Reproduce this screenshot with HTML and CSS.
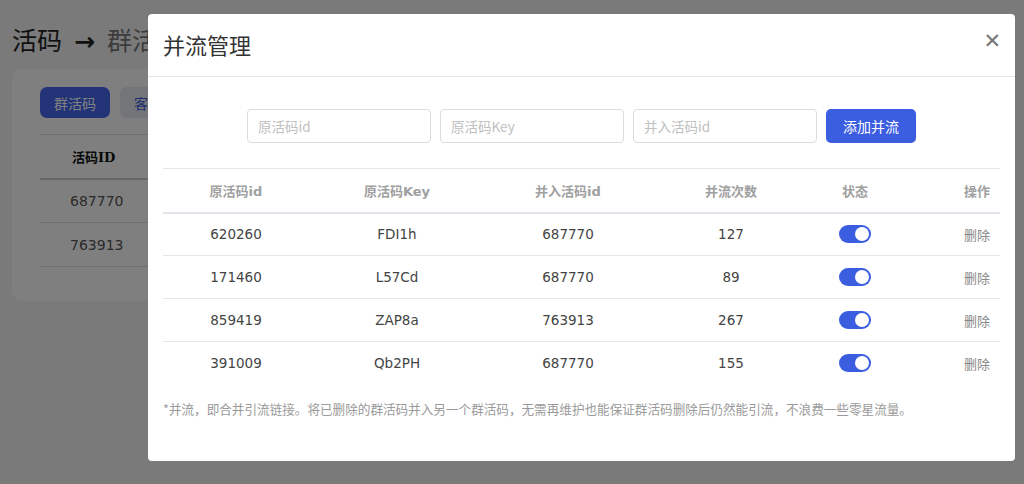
FILE: index.html
```html
<!DOCTYPE html>
<html lang="zh-CN">
<head>
<meta charset="utf-8">
<title>并流管理</title>
<link rel="stylesheet" href="styles.css">
</head>
<body>
<div class="page">
  <h1 class="page-title">活码<span class="arrow">→</span><span class="sub">群活码</span></h1>
  <div class="card">
    <div class="tabs">
      <button class="tab active">群活码</button>
      <button class="tab">客服码</button>
    </div>
    <table class="bg-table">
      <thead><tr><th>活码ID</th></tr></thead>
      <tbody>
        <tr><td>687770</td></tr>
        <tr><td>763913</td></tr>
      </tbody>
    </table>
  </div>
</div>

<div class="overlay"></div>

<div class="modal">
  <div class="modal-header">
    <h2 class="modal-title">并流管理</h2>
    <span class="close">✕</span>
  </div>
  <div class="modal-body">
    <div class="form-row">
      <input class="field" placeholder="原活码id">
      <input class="field" placeholder="原活码Key">
      <input class="field" placeholder="并入活码id">
      <button class="btn-primary">添加并流</button>
    </div>
    <table class="merge-table">
      <colgroup>
        <col class="c1"><col class="c2"><col class="c3"><col class="c4"><col class="c5"><col class="c6">
      </colgroup>
      <thead>
        <tr><th>原活码id</th><th>原活码Key</th><th>并入活码id</th><th>并流次数</th><th>状态</th><th class="op">操作</th></tr>
      </thead>
      <tbody>
        <tr><td>620260</td><td>FDI1h</td><td>687770</td><td>127</td><td><span class="switch"></span></td><td class="op"><span class="del">删除</span></td></tr>
        <tr><td>171460</td><td>L57Cd</td><td>687770</td><td>89</td><td><span class="switch"></span></td><td class="op"><span class="del">删除</span></td></tr>
        <tr><td>859419</td><td>ZAP8a</td><td>763913</td><td>267</td><td><span class="switch"></span></td><td class="op"><span class="del">删除</span></td></tr>
        <tr><td>391009</td><td>Qb2PH</td><td>687770</td><td>155</td><td><span class="switch"></span></td><td class="op"><span class="del">删除</span></td></tr>
      </tbody>
    </table>
    <p class="note">*并流，即合并引流链接。将已删除的群活码并入另一个群活码，无需再维护也能保证群活码删除后仍然能引流，不浪费一些零星流量。</p>
  </div>
</div>
</body>
</html>
```

FILE: styles.css
```css
* { box-sizing: border-box; }
html, body { margin: 0; height: 100%; }
body {
  background: #f4f4f4;
  font-family: "Noto Sans CJK SC", sans-serif;
  color: #333;
  overflow: hidden;
}
.page { padding: 22px 12px 0 12px; }
.page-title {
  margin: 0;
  font-size: 25px;
  font-weight: 400;
  line-height: 34px;
  color: #222;
}
.page-title .arrow {
  font-family: "DejaVu Sans", sans-serif;
  font-weight: 700;
  font-size: 25px;
  margin: 0 12px 0 12px;
}
.page-title .sub { color: #777; }
.card {
  margin-top: 10px;
  background: #fff;
  border-radius: 10px;
  height: 232px;
  width: 600px;
  padding: 18px 28px;
}
.tabs { display: flex; gap: 10px; }
.tab {
  height: 31px;
  padding: 0 14px;
  border: none;
  border-radius: 7px;
  background: #e9ebf3;
  color: #3b5be0;
  font-family: "Noto Sans CJK SC", sans-serif;
  font-size: 14px;
}
.tab.active { background: #4466f0; color: #fff; }
.bg-table {
  margin-top: 16px;
  border-collapse: collapse;
  width: 500px;
  font-size: 14px;
}
.bg-table th {
  text-align: left;
  padding: 0 32px;
  height: 44px;
  font-family: "DejaVu Serif", "Noto Sans CJK SC", serif;
  font-size: 13px;
  color: #111;
  border-top: 1px solid #ddd;
  border-bottom: 2px solid #ccc;
}
.bg-table td {
  height: 44px;
  padding: 0 30px;
  font-family: "DejaVu Sans", sans-serif;
  color: #555;
  border-bottom: 1px solid #ddd;
}

.overlay {
  position: fixed;
  inset: 0;
  background: rgba(0, 0, 0, 0.5);
}
.modal {
  position: absolute;
  left: 148px;
  top: 14px;
  width: 867px;
  height: 447px;
  background: #fff;
  border-radius: 4px;
}
.modal-header {
  height: 63px;
  border-bottom: 1px solid #e5e5ea;
  display: flex;
  align-items: center;
  justify-content: space-between;
  padding: 0 14px 0 15px;
}
.modal-title {
  margin: 0;
  font-size: 22px;
  font-weight: 400;
  color: #333;
  position: relative;
  top: -1px;
}
.close {
  font-family: "DejaVu Sans", sans-serif;
  font-size: 21px;
  font-weight: 700;
  color: #777;
  position: relative;
  top: -4px;
}
.modal-body { padding: 32px 15px 0 15px; }
.form-row {
  display: flex;
  justify-content: center;
  gap: 9px;
}
.field {
  width: 184px;
  height: 34px;
  border: 1px solid #d9dce3;
  border-radius: 4px;
  padding: 0 10px;
  font-family: "Noto Sans CJK SC", sans-serif;
  font-size: 13.5px;
  color: #333;
  outline: none;
}
.field::placeholder { color: #c0c0c0; }
.btn-primary {
  width: 90px;
  height: 34px;
  border: none;
  border-radius: 5px;
  background: #3b5de0;
  color: #fff;
  font-family: "Noto Sans CJK SC", sans-serif;
  font-size: 14px;
}
.merge-table {
  margin-top: 25px;
  width: 100%;
  table-layout: fixed;
  border-collapse: collapse;
  border-top: 1px solid #e5e5ea;
}
.c1 { width: 146px; }
.c2 { width: 176px; }
.c3 { width: 166px; }
.c4 { width: 160px; }
.c5 { width: 88px; }
.c6 { width: 101px; }
.merge-table th {
  height: 44px;
  font-size: 13px;
  font-weight: 700;
  color: #a0a0a0;
  text-align: center;
  border-bottom: 2px solid #e3e5eb;
  font-family: "DejaVu Sans", "Noto Sans CJK SC", sans-serif;
}
.merge-table td {
  height: 43px;
  text-align: center;
  font-family: "DejaVu Sans", "Noto Sans CJK SC", sans-serif;
  font-size: 13.5px;
  color: #444;
  border-bottom: 1px solid #e5e5ea;
}
.merge-table tbody tr:last-child td { border-bottom: none; }
.merge-table .op { text-align: right; padding-right: 10px; }
.del { font-family: "Noto Sans CJK SC", sans-serif; font-size: 13px; color: #888; }
.switch {
  display: inline-block;
  width: 32px;
  height: 18px;
  border-radius: 9px;
  background: #3b5de0;
  position: relative;
  vertical-align: middle;
}
.switch::after {
  content: "";
  position: absolute;
  right: 2px;
  top: 2px;
  width: 14px;
  height: 14px;
  border-radius: 50%;
  background: #fff;
}
.note {
  margin: 15px 0 0 0;
  font-size: 12.6px;
  color: #9a9a9a;
  line-height: 18px;
}
```
